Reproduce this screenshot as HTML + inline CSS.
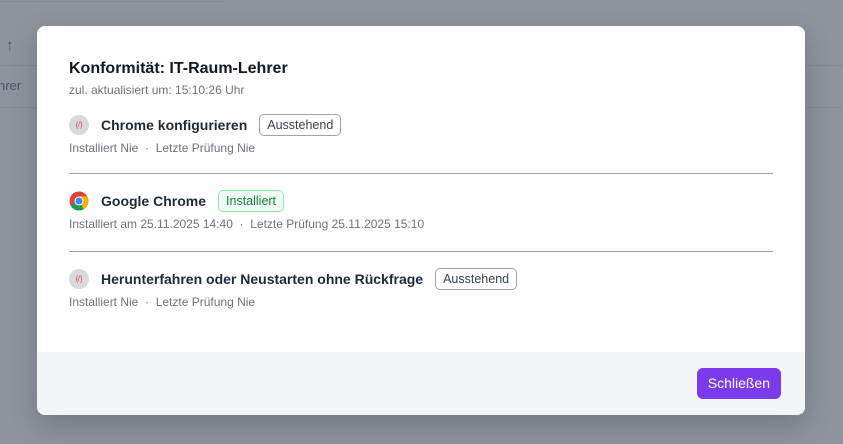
<!DOCTYPE html><html><head><style>
body{margin:0;width:843px;height:444px;background:#8f939e;font-family:"Liberation Sans",sans-serif;position:relative;overflow:hidden}
.bgl{position:absolute;left:0;height:1px;background:#858994}
.modal{position:absolute;left:37px;top:26px;width:768px;height:389px;background:#fff;border-radius:8px;overflow:hidden;box-shadow:0 10px 30px rgba(0,0,0,.2)}
.t{position:absolute;left:32px;top:34px;font-size:16px;font-weight:bold;color:#111827}
.s{position:absolute;left:32px;top:57px;font-size:12px;color:#6b7280}
.item{position:absolute;left:32px;width:704px}
.row{display:flex;align-items:center;height:24px}
.nm{font-size:14px;font-weight:bold;color:#1f2937;margin-left:12px}
.b{margin-left:12px;font-size:12.5px;padding:3px 7px;border:1px solid #9ca3af;border-radius:5px;color:#374151}
.g{border-color:#86efac;background:#f0fdf4;color:#15803d}
.m{font-size:12px;color:#6b7280;margin-top:4px}
.ic{width:20px;height:20px;border-radius:50%;background:#d8d9dc;font-size:7px;color:#d33;display:flex;align-items:center;justify-content:center}
.hr{position:absolute;left:32px;width:704px;height:1px;background:#9ca3af}
.f{position:absolute;left:0;top:326px;width:768px;height:63px;background:#f3f4f6}
.btn{position:absolute;right:24px;top:16px;background:#7c3aed;color:#fff;font-size:14px;padding:7px 11px 8px;border-radius:6px}
</style></head><body>
<div class="bgl" style="top:1px;width:225px"></div>
<div class="bgl" style="top:65px;width:843px"></div>
<div class="bgl" style="top:107px;width:843px"></div>
<div style="position:absolute;left:6px;top:37px;color:#4b5563;font-size:15px">↑</div>
<div style="position:absolute;left:-2px;top:78px;color:#4b5563;font-size:13px">hrer</div>
<div class="modal">
<div class="t">Konformität: IT-Raum-Lehrer</div>
<div class="s">zul. aktualisiert um: 15:10:26 Uhr</div>
<div class="item" style="top:87px"><div class="row"><div class="ic">{/}</div><span class="nm">Chrome konfigurieren</span><span class="b">Ausstehend</span></div><div class="m">Installiert Nie &nbsp;·&nbsp; Letzte Prüfung Nie</div></div>
<div class="hr" style="top:147px"></div>
<div class="item" style="top:163px"><div class="row"><svg width="20" height="20" viewBox="0 0 20 20"><circle cx="10" cy="10" r="9.5" fill="#db4437"/><path d="M10 10 L1.8 14.7 A9.5 9.5 0 0 0 14.7 18.2Z" fill="#0f9d58"/><path d="M10 10 L14.7 18.2 A9.5 9.5 0 0 0 18.2 5.3 L10 5.3Z" fill="#f4b400"/><circle cx="10" cy="10" r="4.5" fill="#fff"/><circle cx="10" cy="10" r="3.5" fill="#4285f4"/></svg><span class="nm">Google Chrome</span><span class="b g">Installiert</span></div><div class="m">Installiert am 25.11.2025 14:40 &nbsp;·&nbsp; Letzte Prüfung 25.11.2025 15:10</div></div>
<div class="hr" style="top:225px"></div>
<div class="item" style="top:241px"><div class="row"><div class="ic">{/}</div><span class="nm">Herunterfahren oder Neustarten ohne Rückfrage</span><span class="b">Ausstehend</span></div><div class="m">Installiert Nie &nbsp;·&nbsp; Letzte Prüfung Nie</div></div>
<div class="f"><div class="btn">Schließen</div></div>
</div>
</body></html>
